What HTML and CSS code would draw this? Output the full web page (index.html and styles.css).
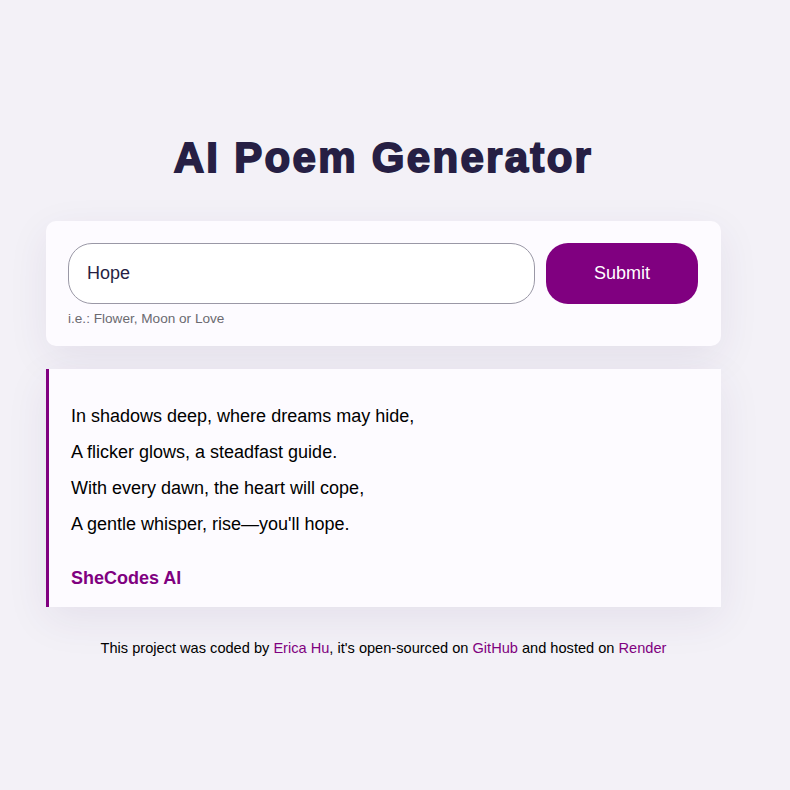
FILE: index.html
```html
<!DOCTYPE html>
<html lang="en">
<head>
    <meta charset="UTF-8">
    <meta name="viewport" content="width=device-width, initial-scale=1.0">
    <title>AI Poem Generator</title>
    <link rel="stylesheet" href="styles.css">
</head>
<body>
    <div class="container">
        <h1>AI Poem Generator</h1>
        <div class="form-card">
            <form class="form-row">
                <input type="text" class="topic" value="Hope" placeholder="Enter a topic">
                <button type="submit" class="submit">Submit</button>
            </form>
            <div class="hint">i.e.: Flower, Moon or Love</div>
        </div>
        <div class="poem">
            <div class="line">In shadows deep, where dreams may hide,</div>
            <div class="line">A flicker glows, a steadfast guide.</div>
            <div class="line">With every dawn, the heart will cope,</div>
            <div class="line">A gentle whisper, rise—you'll hope.</div>
            <div class="signature">SheCodes AI</div>
        </div>
        <footer>
            This project was coded by <a href="#">Erica Hu</a>, it's open-sourced on <a href="#">GitHub</a> and hosted on <a href="#">Render</a>
        </footer>
    </div>
</body>
</html>
```

FILE: styles.css
```css
body {
    margin: 0;
    padding: 0;
    background: #f3f1f7;
    font-family: "Liberation Sans", Arial, sans-serif;
    color: #000;
}
.container {
    width: 675px;
    margin-left: 46px;
    padding-top: 131px;
}
h1 {
    margin: 0 0 36px;
    text-align: center;
    font-size: 42px;
    line-height: 54px;
    font-weight: 900;
    color: #261f44;
    -webkit-text-stroke: 1.8px #261f44;
    letter-spacing: 2.3px;
}
.form-card {
    background: #fdfbff;
    border-radius: 10px;
    padding: 22px 23px 19px 22px;
    box-shadow: 0 12px 40px rgba(60, 40, 100, 0.08);
}
.form-row {
    display: flex;
    gap: 11px;
    margin: 0;
}
.topic {
    flex: 1;
    height: 61px;
    box-sizing: border-box;
    border: 1px solid #9a98a6;
    border-radius: 24px;
    padding: 0 18px;
    font-family: inherit;
    font-size: 18px;
    color: #261f44;
    background: #fff;
    outline: none;
}
.submit {
    width: 152px;
    height: 61px;
    border: none;
    border-radius: 22px;
    background: #800080;
    color: #fff;
    font-family: inherit;
    font-size: 18px;
    cursor: pointer;
}
.hint {
    margin-top: 6px;
    font-size: 13.6px;
    line-height: 17px;
    color: #6b6a70;
}
.poem {
    margin-top: 23px;
    background: #fdfbff;
    border-left: 3px solid #800080;
    padding: 29px 22px 11px;
    box-shadow: 0 12px 40px rgba(60, 40, 100, 0.08);
}
.line {
    font-size: 18px;
    line-height: 36px;
}
.signature {
    margin-top: 18px;
    font-size: 18px;
    line-height: 36px;
    font-weight: bold;
    color: #800080;
}
footer {
    margin-top: 31px;
    text-align: center;
    font-size: 14.6px;
    line-height: 20px;
}
footer a {
    color: #800080;
    text-decoration: none;
}
```
